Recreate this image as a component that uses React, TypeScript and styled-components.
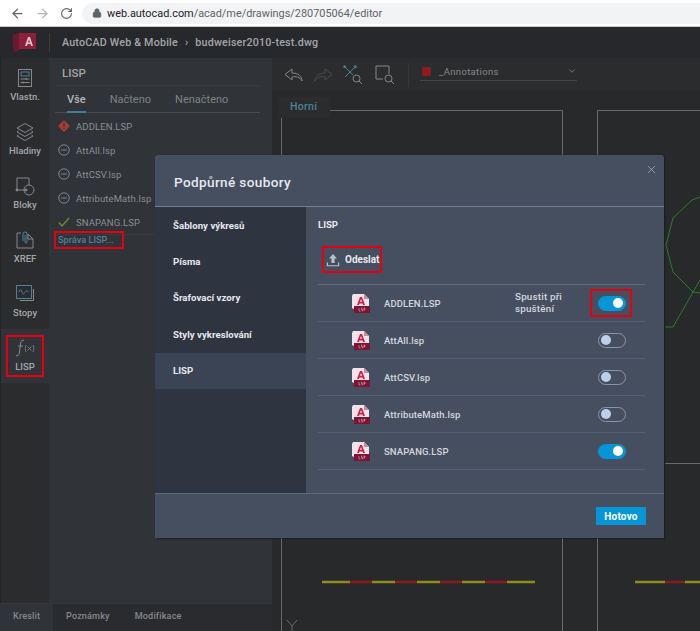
import { ArrowLeft, ArrowRight, ChevronDown, Lock, RotateCw, X } from "lucide-react";
import { ReactNode } from "react";
import styled, { createGlobalStyle } from "styled-components";

const GlobalStyle = createGlobalStyle`
  html, body {
    margin: 0;
    padding: 0;
    background: #28292b;
    font-family: "Roboto", "Noto Sans", sans-serif;
  }
  * {
    box-sizing: border-box;
  }
`;

const Page = styled.div`
  position: relative;
  display: flex;
  flex-direction: column;
  width: 700px;
  height: 631px;
  overflow: hidden;
`;

const BrowserBar = styled.div`
  display: flex;
  align-items: center;
  gap: 10px;
  height: 27px;
  flex-shrink: 0;
  padding: 0 0 0 10px;
  background: #fff;
  border-bottom: 1px solid #c9c9c9;
  color: #5f6368;
`;

const UrlPill = styled.div`
  display: flex;
  align-items: center;
  gap: 5px;
  flex: 1;
  height: 21px;
  margin-left: -1px;
  padding-left: 10px;
  border-radius: 11px 0 0 11px;
  background: #f1f3f4;
  font-family: "Roboto", sans-serif;
  font-size: 10.9px;
  color: #5f6368;
  b {
    font-weight: 400;
    color: #202124;
  }
`;

const AppHeader = styled.div`
  display: flex;
  align-items: center;
  height: 31px;
  flex-shrink: 0;
  background: #26282b;
  color: #a3a6a9;
  font-size: 10.7px;
  font-weight: 500;
  letter-spacing: 0.2px;
`;

const LogoCell = styled.div`
  display: flex;
  align-items: center;
  width: 50px;
  height: 19px;
  padding-left: 13px;
  border-right: 1px solid #3a3c3f;
`;

const Crumbs = styled.div`
  display: flex;
  align-items: center;
  gap: 7px;
  margin-left: 12px;
`;

const Main = styled.div`
  display: flex;
  flex: 1;
  min-height: 0;
`;

const LeftSide = styled.div`
  display: flex;
  flex-direction: column;
  width: 272px;
  flex-shrink: 0;
`;

const LeftTop = styled.div`
  display: flex;
  flex: 1;
  min-height: 0;
`;

const Rail = styled.div`
  display: flex;
  flex-direction: column;
  width: 49px;
  padding-top: 1px;
  background: #2a2c2e;
  border-left: 1px solid #232427;
`;

const RailItem = styled.div<{ $active?: boolean }>`
  display: flex;
  align-items: center;
  justify-content: center;
  height: 54px;
  background: ${(p) => (p.$active ? "#303338" : "transparent")};
`;

const RailInner = styled.div<{ $marked?: boolean }>`
  display: flex;
  flex-direction: column;
  align-items: center;
  justify-content: flex-end;
  width: 38px;
  height: 42px;
  gap: 3px;
  padding-bottom: 4px;
  outline: ${(p) => (p.$marked ? "2px solid #e8000f" : "none")};
  outline-offset: -2px;
  color: #a3a6a9;
  font-size: 9.5px;
  font-weight: 500;
  line-height: 12px;
`;

const Panel = styled.div`
  flex: 1;
  padding: 0 12px 0 6px;
  background: #303338;
`;

const PanelTitle = styled.div`
  height: 28px;
  padding: 8px 0 0 7px;
  border-bottom: 1px solid #383b40;
  color: #a3a6a9;
  font-size: 11.500px;
  font-weight: 500;
  line-height: 14px;
`;

const TabRow = styled.div`
  display: flex;
  height: 27px;
  padding-left: 12px;
  gap: 24px;
  border-bottom: 1px solid #474a4f;
`;

const Tab = styled.div<{ $active?: boolean }>`
  height: 27px;
  padding-top: 6px;
  color: ${(p) => (p.$active ? "#b4b7b9" : "#7f8387")};
  font-size: 11px;
  font-weight: ${(p) => (p.$active ? 500 : 400)};
  line-height: 16px;
  border-bottom: ${(p) => (p.$active ? "2px solid #3f7f9b" : "none")};
`;

const LispRow = styled.div`
  display: flex;
  align-items: center;
  gap: 6px;
  height: 24px;
  padding-left: 3px;
  color: #8b8e92;
  font-size: 9.5px;
  letter-spacing: 0.12px;
`;

const LispList = styled.div`
  padding-top: 1px;
  border-bottom: 1px solid #383b40;
`;

const ManageLink = styled.div`
  width: 66px;
  height: 14px;
  margin: -2px 0 0 1px;
  padding-left: 2px;
  color: #4f8198;
  font-size: 9.2px;
  font-weight: 500;
  line-height: 14px;
  outline: 2px solid #e8000f;
`;

const BottomTabs = styled.div`
  display: flex;
  height: 28px;
  flex-shrink: 0;
  background: #2a2b2e;
  border-top: 1px solid #35373b;
  color: #85888c;
  font-size: 9.1px;
  font-weight: 500;
  letter-spacing: 0.15px;
`;

const BottomTab = styled.div<{ $active?: boolean }>`
  display: flex;
  align-items: center;
  width: ${(p) => (p.$active ? "53px" : "auto")};
  padding: 0 12px 4px 13px;
  background: ${(p) => (p.$active ? "#303338" : "transparent")};
`;

const Work = styled.div`
  position: relative;
  display: flex;
  flex-direction: column;
  flex: 1;
  background: #28292b;
`;

const Toolbar = styled.div`
  display: flex;
  align-items: center;
  height: 33px;
  padding-left: 12px;
  background: #2a2c2e;
`;

const ToolIcon = styled.svg<{ $gap?: number }>`
  flex-shrink: 0;
  margin-right: ${(p) => p.$gap ?? 10}px;
`;

const ToolDivider = styled.div`
  width: 1px;
  height: 24px;
  margin: 0 11px 0 13px;
  background: #35373a;
`;

const LayerSelect = styled.div`
  display: flex;
  align-items: center;
  align-self: flex-start;
  width: 157px;
  height: 18px;
  margin-top: 5px;
  padding: 0 0 1px 2px;
  border-bottom: 1px solid #434649;
  color: #85888c;
  font-size: 9.5px;
  letter-spacing: 0.35px;
`;

const LayerSwatch = styled.div`
  width: 9px;
  height: 9px;
  margin-right: 8px;
  border-radius: 1px;
  background: #8a1c1f;
`;

const LayerName = styled.div`
  flex: 1;
`;

const Drawing = styled.svg`
  position: absolute;
  left: 0;
  top: 0;
`;

const ViewTab = styled.div`
  position: relative;
  width: 51px;
  height: 21px;
  margin: 6px 0 0 7px;
  padding: 2px 0 0 11px;
  background: #2a2c2e;
  color: #4f8198;
  font-size: 10.5px;
  font-weight: 500;
  letter-spacing: 0.3px;
  line-height: 15px;
`;

const Modal = styled.div`
  position: absolute;
  left: 155px;
  top: 155px;
  display: flex;
  flex-direction: column;
  width: 509px;
  height: 383px;
  border-radius: 3px 3px 0 0;
  background: #464f60;
  box-shadow: 1px 1px 2px rgba(0, 0, 0, 0.35);
  color: #e6e9ee;
`;

const ModalHeader = styled.div`
  display: flex;
  align-items: center;
  justify-content: space-between;
  height: 52px;
  flex-shrink: 0;
  padding: 2px 8px 0 19px;
  border-bottom: 1px solid #748092;
  font-size: 13.6px;
  font-weight: 500;
  letter-spacing: 0.35px;
`;

const CloseButton = styled.div`
  display: flex;
  align-self: flex-start;
  margin: 6px -2px 0 0;
  color: #b6bdc8;
`;

const ModalBody = styled.div`
  display: flex;
  flex: 1;
  min-height: 0;
`;

const SideMenu = styled.div`
  width: 151px;
  flex-shrink: 0;
  background: #2e3440;
`;

const SideItem = styled.div<{ $active?: boolean }>`
  display: flex;
  align-items: center;
  height: 36.4px;
  padding-left: 18px;
  background: ${(p) => (p.$active ? "#3b4454" : "transparent")};
  font-size: 9.6px;
  font-weight: 700;
  letter-spacing: 0.05px;
`;

const Content = styled.div`
  flex: 1;
  padding: 11px 19px 0 12px;
`;

const ContentTitle = styled.div`
  height: 14px;
  font-size: 9.5px;
  font-weight: 700;
  line-height: 14px;
`;

const UploadRow = styled.div`
  height: 53px;
  padding: 14px 0 0 4px;
  border-bottom: 1px solid #5f6a7b;
`;

const UploadButton = styled.div`
  display: flex;
  align-items: center;
  gap: 5px;
  width: 60px;
  height: 27px;
  padding-left: 4px;
  outline: 2px solid #e8000f;
  outline-offset: -2px;
  font-size: 10px;
  font-weight: 700;
`;

const FileRow = styled.div`
  display: flex;
  align-items: center;
  height: 37px;
  padding-left: 34px;
  border-bottom: 1px solid #566073;
`;

const FileName = styled.div`
  width: 131px;
  margin-left: 14px;
  color: #d3d7de;
  font-size: 9.5px;
  font-weight: 500;
  letter-spacing: 0.12px;
`;

const StartLabel = styled.div`
  width: 75px;
  color: #d3d7de;
  font-size: 9.8px;
  font-weight: 500;
  letter-spacing: 0.2px;
  line-height: 12px;
`;

const ToggleSlot = styled.div<{ $marked?: boolean; $shift: boolean }>`
  display: flex;
  align-items: center;
  justify-content: center;
  width: 42px;
  height: 28px;
  margin-left: ${(p) => (p.$shift ? "75px" : "0")};
  padding-left: 2px;
  outline: ${(p) => (p.$marked ? "2px solid #e8000f" : "none")};
  outline-offset: -2px;
`;

const Toggle = styled.div<{ $on?: boolean }>`
  display: flex;
  align-items: center;
  justify-content: ${(p) => (p.$on ? "flex-end" : "flex-start")};
  width: 28px;
  height: 15px;
  padding: 0 2px;
  border-radius: 8px;
  border: 1px solid ${(p) => (p.$on ? "#0696d7" : "#8a95a7")};
  background: ${(p) => (p.$on ? "#0696d7" : "transparent")};
`;

const Knob = styled.div<{ $on?: boolean }>`
  width: 10px;
  height: 10px;
  border-radius: 50%;
  background: ${(p) => (p.$on ? "#fff" : "#bcd0ea")};
`;

const ModalFooter = styled.div`
  display: flex;
  align-items: center;
  justify-content: flex-end;
  height: 45px;
  flex-shrink: 0;
  padding: 0 18px 0 0;
  border-top: 1px solid #5f6a7b;
`;

const DoneButton = styled.div`
  display: flex;
  align-items: center;
  justify-content: center;
  width: 50px;
  height: 18px;
  border-radius: 1px;
  background: #0696d7;
  color: #fff;
  font-size: 10px;
  font-weight: 700;
  letter-spacing: 0.2px;
`;

const railStroke = { fill: "none", stroke: "#85888c", strokeWidth: 1 };

function PropsIcon() {
  return (
    <svg width="16" height="20" viewBox="0 0 16 20" {...railStroke}>
      <rect x="1.5" y="1.5" width="13" height="17" />
      <rect x="4" y="4" width="8" height="4" stroke="#4f8198" />
      <path d="M3.5 11h9M3.5 14.5h9M9 10v2M6 13.5v2" />
    </svg>
  );
}

function LayersIcon() {
  return (
    <svg width="20" height="20" viewBox="0 0 20 20" {...railStroke}>
      <path d="M10 1.5 18 6l-8 4.5L2 6z" />
      <path d="M3.5 9 2 10l8 4.5 8-4.5-1.5-1" />
      <path d="M3.5 13 2 14l8 4.5 8-4.5-1.5-1" />
    </svg>
  );
}

function BlocksIcon() {
  return (
    <svg width="20" height="20" viewBox="0 0 20 20" {...railStroke}>
      <path d="M11 14H2V2h12v7" />
      <circle cx="14" cy="14" r="5" />
      <circle cx="2" cy="14" r="1" fill="#85888c" />
      <circle cx="11" cy="14" r="1" fill="#85888c" />
    </svg>
  );
}

function XrefIcon() {
  return (
    <svg width="20" height="20" viewBox="0 0 20 20" {...railStroke}>
      <path d="M6 3H2v15h16V9l-5-5" />
      <path d="M13 4v5h5" />
      <path d="M8 11V4a2 2 0 0 1 4 0v8a1 1 0 0 1-2 0V5" stroke="#4f8198" />
    </svg>
  );
}

function PlotIcon() {
  return (
    <svg width="20" height="20" viewBox="0 0 20 20" {...railStroke}>
      <rect x="1.5" y="1.5" width="15" height="13" stroke="#4f8198" />
      <path d="M4 8c1-3 2-3 3 0s2 2 3 0 2-1 4 0" stroke="#4f8198" />
      <path d="M18.5 5v11.5H5" />
    </svg>
  );
}

function FxIcon() {
  return (
    <svg width="20" height="20" viewBox="0 0 20 20" {...railStroke}>
      <path d="M9 2.5C7 1.5 6 3 5.7 5L4.3 15c-.3 2-1.3 3.5-3.3 2.5" />
      <path d="M3 8h5" />
      <path d="M11 7c-1 2-1 5 0 7M18 7c1 2 1 5 0 7M12.5 8.5l4 4M16.5 8.5l-4 4" strokeWidth="0.8" />
    </svg>
  );
}

function Diamond() {
  return (
    <svg width="12" height="12" viewBox="0 0 12 12">
      <path d="M6 0 12 6 6 12 0 6z" fill="#a83a36" />
      <path d="M5.4 2.6h1.2v4.2H5.4zM5.4 7.8h1.2V9H5.4z" fill="#303338" />
    </svg>
  );
}

function MinusCircle() {
  return (
    <svg width="12" height="12" viewBox="0 0 12 12" fill="none" stroke="#85888c">
      <circle cx="6" cy="6" r="5.2" />
      <path d="M3.2 6h5.6" />
    </svg>
  );
}

function Check() {
  return (
    <svg width="12" height="12" viewBox="0 0 12 12" fill="none" stroke="#6d8c3a" strokeWidth="1.3">
      <path d="M.8 6.5 4 10 11.2 2" />
    </svg>
  );
}

function Logo() {
  return (
    <svg width="23" height="19" viewBox="0 0 23 19">
      <path d="M0 2 6 0h17v16H7l-6 3z" fill="#8d2038" />
      <path d="M0 2 6 0v16l-5 3z" fill="#6a1a2c" />
      <path d="M12 13l3-9h2l3 9h-2l-.6-2h-2.8l-.6 2zm3.1-3.5h1.8L16 6.5z" fill="#d9c2c8" />
    </svg>
  );
}

function UploadIcon() {
  return (
    <svg width="14" height="14" viewBox="0 0 14 14" fill="#b9bec7">
      <path d="M7 1 11 5.5H8.6V10H5.4V5.5H3z" />
      <path d="M.8 9.5h1.2v2.7h10V9.5h1.2v3.7H.8z" />
    </svg>
  );
}

function LspFile() {
  return (
    <svg width="18" height="19" viewBox="0 0 18 19">
      <path d="M0 2 1 0h11l5 5v10H2L0 14z" fill="#f3e3e8" />
      <path d="M12 0l5 5h-5z" fill="#c98a9f" />
      <path d="M5 11 8 3h2l3 8h-2l-.5-1.6h-3L7 11zm3-3.2h2L9 4.9z" fill="#c91f4a" />
      <rect x="2" y="12" width="16" height="7" fill="#7d1433" />
      <path d="M7 14v3h1.5M10.5 14h-1v1.5h1V17h-1M12 17v-3h1v1.5h-1" fill="none" stroke="#eecbd5" strokeWidth="0.5" />
    </svg>
  );
}

function Toolbuttons() {
  return (
    <>
      <ToolIcon $gap={11} width="19" height="14" viewBox="0 0 19 14" fill="none" stroke="#85888c">
        <path d="M8 1 1 6.5 8 12V9c4-1 8 0 10 4 0-5-4-8-10-8z" />
      </ToolIcon>
      <ToolIcon $gap={10} width="19" height="14" viewBox="0 0 19 14" fill="none" stroke="#4a4c50">
        <path d="M11 1l7 5.5L11 12V9c-4-1-8 0-10 4 0-5 4-8 10-8z" />
      </ToolIcon>
      <ToolIcon $gap={12} width="20" height="20" viewBox="0 0 20 20" fill="none" stroke="#85888c">
        <path d="M2 2 10 10M12 2 2 12" stroke="#4f8198" />
        <rect x="0.5" y="0.5" width="2.5" height="2.5" fill="#4f8198" stroke="none" />
        <rect x="11" y="0.5" width="2.5" height="2.5" fill="#4f8198" stroke="none" />
        <circle cx="13.5" cy="13.5" r="3.5" />
        <path d="m16 16 3 3" />
      </ToolIcon>
      <ToolIcon $gap={0} width="20" height="20" viewBox="0 0 20 20" fill="none" stroke="#85888c">
        <path d="M8 14H1V1h13v8" />
        <circle cx="13.5" cy="13.5" r="3.5" />
        <path d="m16 16 3 3" />
      </ToolIcon>
    </>
  );
}

function Canvas() {
  const dashes = [
    [50, 78, "#8f8c1c"],
    [78, 100, "#8a1c1f"],
    [100, 123, "#8f8c1c"],
    [123, 145, "#8a1c1f"],
    [145, 168, "#8f8c1c"],
    [168, 190, "#8a1c1f"],
    [190, 213, "#8f8c1c"],
    [213, 235, "#8a1c1f"],
    [235, 263, "#8f8c1c"],
    [363, 393, "#8f8c1c"],
    [393, 413, "#8a1c1f"],
    [413, 428, "#8f8c1c"],
  ] as const;
  return (
    <Drawing width="428" height="573" viewBox="0 0 428 573" fill="none">
      <g stroke="#68696b" strokeWidth="1">
        <path d="M58 52.5H290.500V573" />
        <path d="M325.500 573V52.500H428" />
        <path d="M9.500 60V573" />
        <path d="M393 405.500H428" />
        <path d="M15 562l5 6 5-6M20 568v5" />
      </g>
      <g stroke="#2f7a2f" strokeWidth="1">
        <path d="M428 139 420 142 401 160 394 187 401 214 421 234 428 235" />
        <path d="M428 222 401 269H393" />
      </g>
      {dashes.map(([a, b, c]) => (
        <path key={a} d={`M${a} 524H${b}`} stroke={c} strokeWidth="2.500" />
      ))}
    </Drawing>
  );
}

const railItems: { label: string; icon: ReactNode; active?: boolean }[] = [
  { label: "Vlastn.", icon: <PropsIcon /> },
  { label: "Hladiny", icon: <LayersIcon /> },
  { label: "Bloky", icon: <BlocksIcon /> },
  { label: "XREF", icon: <XrefIcon /> },
  { label: "Stopy", icon: <PlotIcon /> },
  { label: "LISP", icon: <FxIcon />, active: true },
];

const lispItems: { name: string; icon: ReactNode }[] = [
  { name: "ADDLEN.LSP", icon: <Diamond /> },
  { name: "AttAll.lsp", icon: <MinusCircle /> },
  { name: "AttCSV.lsp", icon: <MinusCircle /> },
  { name: "AttributeMath.lsp", icon: <MinusCircle /> },
  { name: "SNAPANG.LSP", icon: <Check /> },
];

const files = [
  { name: "ADDLEN.LSP", on: true, first: true },
  { name: "AttAll.lsp", on: false },
  { name: "AttCSV.lsp", on: false },
  { name: "AttributeMath.lsp", on: false },
  { name: "SNAPANG.LSP", on: true },
];

const sideItems = ["Šablony výkresů", "Písma", "Šrafovací vzory", "Styly vykreslování", "LISP"];

function App() {
  return (
    <Page>
      <GlobalStyle />
      <BrowserBar>
        <ArrowLeft size={15} color="#5f6368" />
        <ArrowRight size={15} color="#b3b5b8" />
        <RotateCw size={13} color="#5f6368" />
        <UrlPill>
          <Lock size={10} fill="#5f6368" color="#5f6368" />
          <span>
            <b>web.autocad.com</b>/acad/me/drawings/280705064/editor
          </span>
        </UrlPill>
      </BrowserBar>
      <AppHeader>
        <LogoCell>
          <Logo />
        </LogoCell>
        <Crumbs>
          <span>AutoCAD Web &amp; Mobile</span>
          <span>›</span>
          <span>budweiser2010-test.dwg</span>
        </Crumbs>
      </AppHeader>
      <Main>
        <LeftSide>
          <LeftTop>
            <Rail>
              {railItems.map((item) => (
                <RailItem key={item.label} $active={item.active}>
                  <RailInner $marked={item.active}>
                    {item.icon}
                    {item.label}
                  </RailInner>
                </RailItem>
              ))}
            </Rail>
            <Panel>
              <PanelTitle>LISP</PanelTitle>
              <TabRow>
                <Tab $active>Vše</Tab>
                <Tab>Načteno</Tab>
                <Tab>Nenačteno</Tab>
              </TabRow>
              <LispList>
                {lispItems.map((item) => (
                  <LispRow key={item.name}>
                    {item.icon}
                    {item.name}
                  </LispRow>
                ))}
              </LispList>
              <ManageLink>Správa LISP...</ManageLink>
            </Panel>
          </LeftTop>
          <BottomTabs>
            <BottomTab $active>Kreslit</BottomTab>
            <BottomTab>Poznámky</BottomTab>
            <BottomTab>Modifikace</BottomTab>
          </BottomTabs>
        </LeftSide>
        <Work>
          <Canvas />
          <Toolbar>
            <Toolbuttons />
            <ToolDivider />
            <LayerSelect>
              <LayerSwatch />
              <LayerName>_Annotations</LayerName>
              <ChevronDown size={10} color="#85888c" />
            </LayerSelect>
          </Toolbar>
          <ViewTab>Horní</ViewTab>
        </Work>
      </Main>
      <Modal>
        <ModalHeader>
          Podpůrné soubory
          <CloseButton>
            <X size={13} strokeWidth={1.2} />
          </CloseButton>
        </ModalHeader>
        <ModalBody>
          <SideMenu>
            {sideItems.map((s) => (
              <SideItem key={s} $active={s === "LISP"}>
                {s}
              </SideItem>
            ))}
          </SideMenu>
          <Content>
            <ContentTitle>LISP</ContentTitle>
            <UploadRow>
              <UploadButton>
                <UploadIcon />
                Odeslat
              </UploadButton>
            </UploadRow>
            {files.map((f) => (
              <FileRow key={f.name}>
                <LspFile />
                <FileName>{f.name}</FileName>
                {f.first && (
                  <StartLabel>
                    Spustit při
                    <br />
                    spuštění
                  </StartLabel>
                )}
                <ToggleSlot $marked={f.first} $shift={!f.first}>
                  <Toggle $on={f.on}>
                    <Knob $on={f.on} />
                  </Toggle>
                </ToggleSlot>
              </FileRow>
            ))}
          </Content>
        </ModalBody>
        <ModalFooter>
          <DoneButton>Hotovo</DoneButton>
        </ModalFooter>
      </Modal>
    </Page>
  );
}

export default App;
